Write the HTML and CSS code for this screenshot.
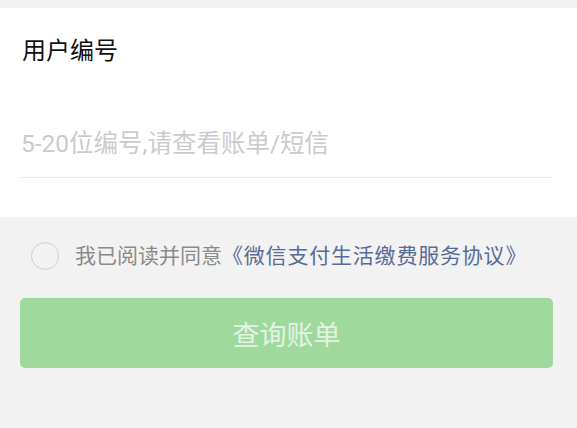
FILE: index.html
```html
<!DOCTYPE html>
<html lang="zh">
<head>
<meta charset="utf-8">
<link rel="stylesheet" href="styles.css">
</head>
<body>
<div class="top-gap"></div>
<section class="card">
  <div class="label">用户编号</div>
  <div class="field">
    <input class="input" type="text" placeholder="5-20位编号,请查看账单/短信">
  </div>
</section>
<div class="agree">
  <span class="radio"></span>
  <span class="agree-text">我已阅读并同意<a class="link">《微信支付生活缴费服务协议》</a></span>
</div>
<div class="btn-wrap">
  <button class="btn">查询账单</button>
</div>
</body>
</html>
```
FILE: styles.css
```css
html, body {
  margin: 0;
  padding: 0;
  background: #f2f2f2;
  font-family: "Roboto", "Noto Sans CJK SC", "Noto Sans", sans-serif;
}
.top-gap {
  height: 8px;
}
.card {
  background: #ffffff;
  padding: 31px 24px 39px 20px;
}
.label {
  font-size: 24px;
  line-height: 24px;
  color: #111;
  padding-left: 2px;
}
.field {
  margin-top: 48px;
  height: 66px;
  border-bottom: 1px solid #ececec;
  display: flex;
  align-items: center;
}
.input {
  border: none;
  outline: none;
  padding: 0 0 0 1px;
  margin: 0;
  width: 100%;
  font-family: inherit;
  font-size: 24.5px;
  line-height: 30px;
  color: #111;
  background: transparent;
}
.input::placeholder {
  color: #cbcbcb;
}
.agree {
  display: flex;
  align-items: center;
  margin-top: 24px;
  padding-left: 31px;
  height: 30px;
}
.radio {
  width: 28px;
  height: 28px;
  border: 1px solid #cfcfcf;
  border-radius: 50%;
  box-sizing: border-box;
  flex: none;
}
.agree-text {
  margin-left: 16px;
  font-size: 21px;
  line-height: 30px;
  color: #8a8a8a;
  white-space: nowrap;
}
.link {
  color: #576b95;
  letter-spacing: 0.8px;
}
.btn-wrap {
  margin-top: 27px;
  padding: 0 24px 0 20px;
}
.btn {
  width: 100%;
  height: 70px;
  border: none;
  border-radius: 5px;
  background: #9fd99e;
  color: #e2f4e1;
  font-family: inherit;
  font-size: 27px;
  display: block;
}
```
